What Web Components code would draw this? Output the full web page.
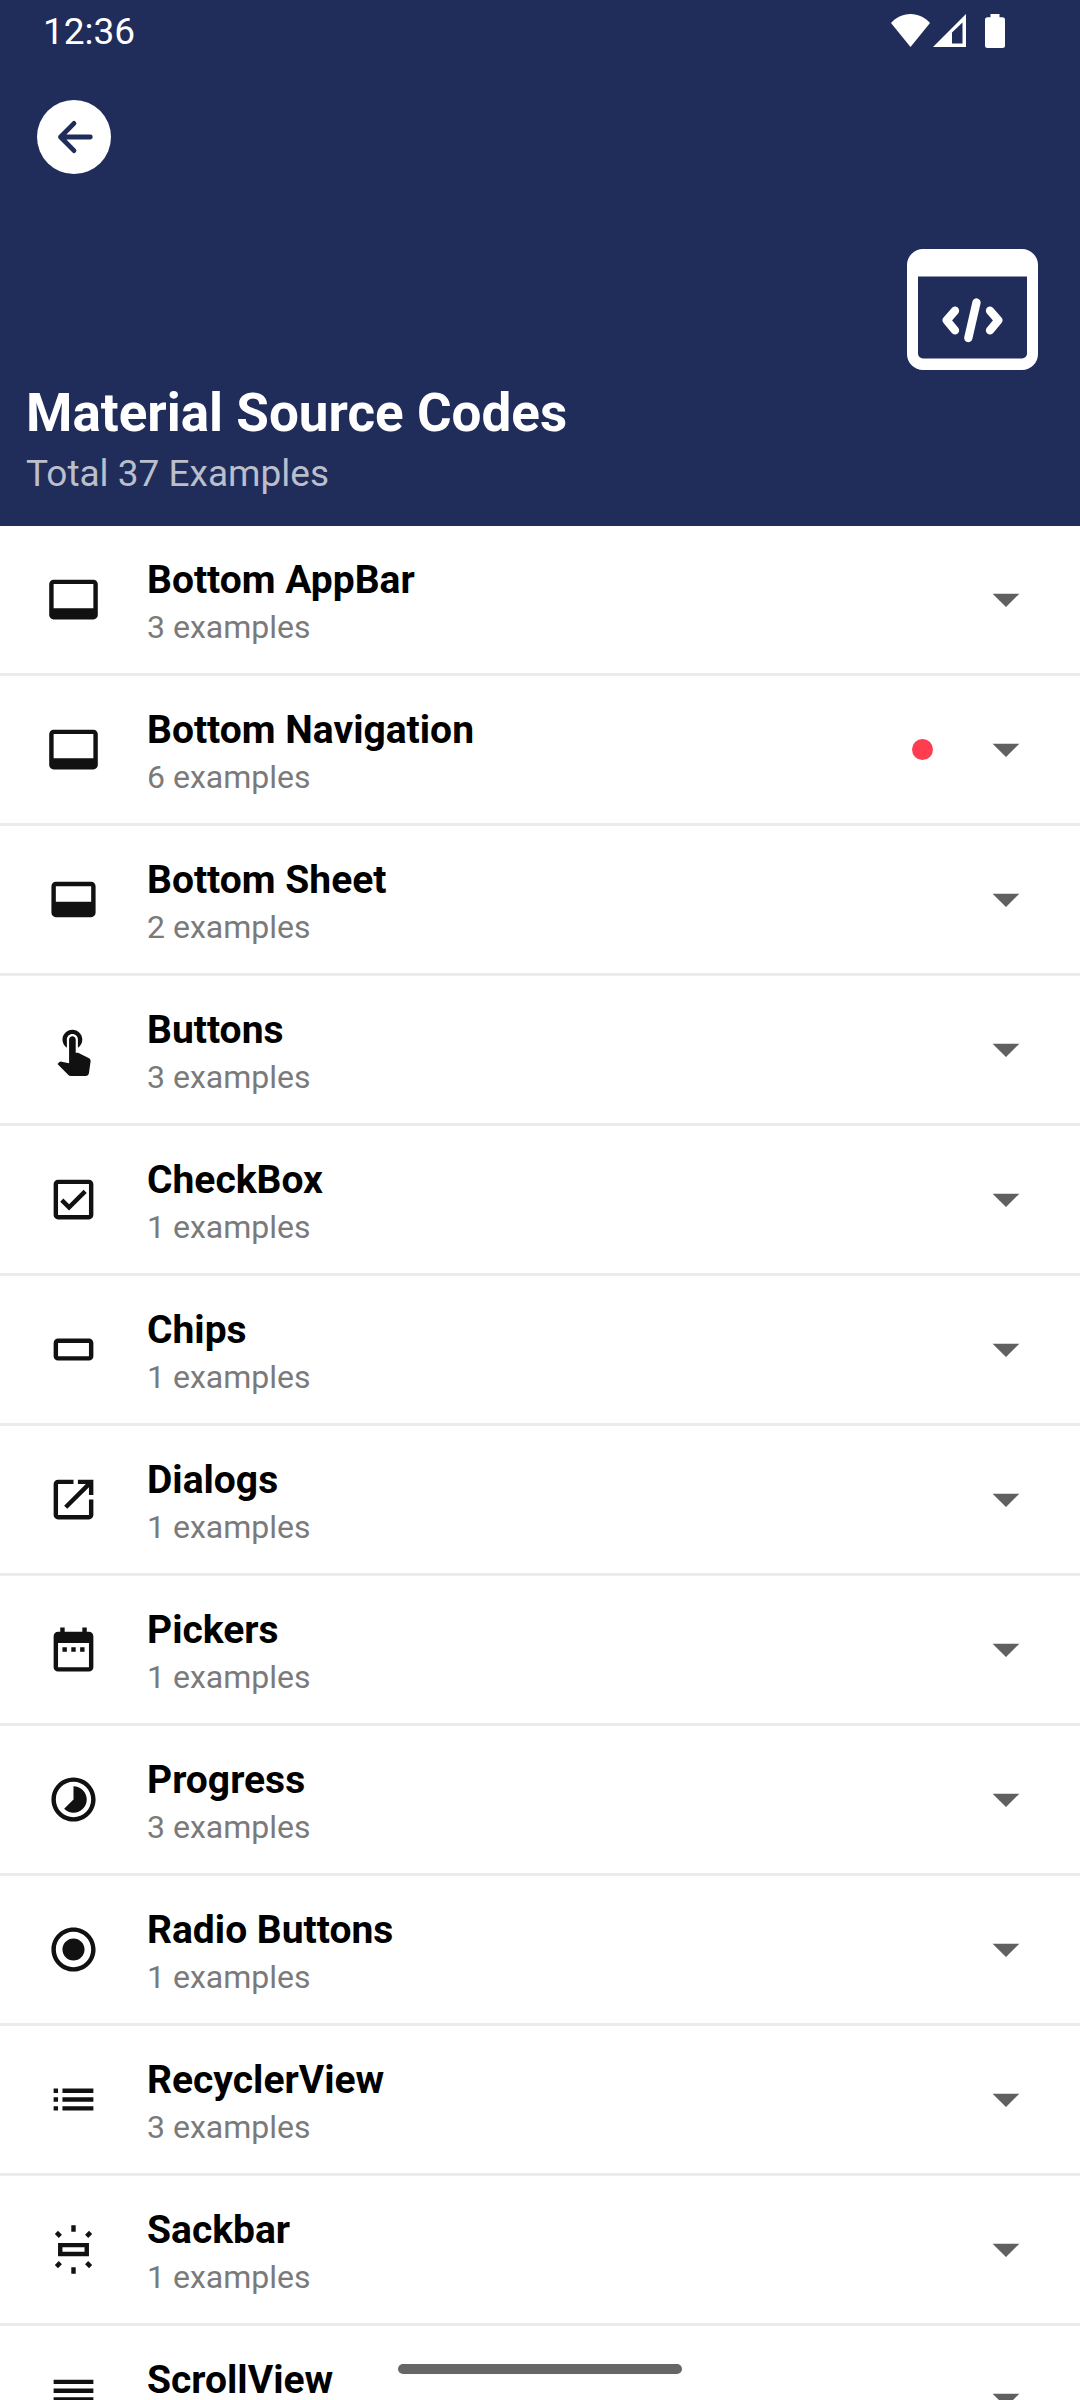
<!DOCTYPE html>
<html lang="en">
<head>
<meta charset="utf-8">
<meta name="viewport" content="width=device-width, initial-scale=1">
<title>Material Source Codes</title>
<style>
  body { margin: 0; background: #fff; font-family: Roboto, "Noto Sans", sans-serif; }
</style>
</head>
<body>
<source-app>
  <status-bar slot="top">12:36</status-bar>
  <page-header slot="top">
    <span slot="title">Material Source Codes</span>
    <span slot="subtitle">Total 37 Examples</span>
  </page-header>
  <topic-row icon="label">Bottom AppBar<span slot="count">3 examples</span></topic-row>
  <topic-row icon="label" fresh>Bottom Navigation<span slot="count">6 examples</span></topic-row>
  <topic-row icon="sheet">Bottom Sheet<span slot="count">2 examples</span></topic-row>
  <topic-row icon="touch">Buttons<span slot="count">3 examples</span></topic-row>
  <topic-row icon="check">CheckBox<span slot="count">1 examples</span></topic-row>
  <topic-row icon="chip">Chips<span slot="count">1 examples</span></topic-row>
  <topic-row icon="open">Dialogs<span slot="count">1 examples</span></topic-row>
  <topic-row icon="date">Pickers<span slot="count">1 examples</span></topic-row>
  <topic-row icon="progress">Progress<span slot="count">3 examples</span></topic-row>
  <topic-row icon="radio">Radio Buttons<span slot="count">1 examples</span></topic-row>
  <topic-row icon="list">RecyclerView<span slot="count">3 examples</span></topic-row>
  <topic-row icon="snack">Sackbar<span slot="count">1 examples</span></topic-row>
  <topic-row icon="lines">ScrollView</topic-row>
</source-app>

<script>
class SourceApp extends HTMLElement {
  constructor() {
    super();
    this.attachShadow({ mode: "open" }).innerHTML = `
      <style>
        :host { display: flex; flex-direction: column; height: 100vh; overflow: hidden; }
        header { flex: none; background: #202d5a; color: #fff; }
        main { flex: 1; min-height: 0; overflow-y: auto; scrollbar-width: none; }
        /* gesture handle floats over the list */
        .handle { position: fixed; bottom: 26px; left: 50%; width: 284px; height: 10px;
          margin-left: -142px; border-radius: 5px; background: #666; }
      </style>
      <header><slot name="top"></slot></header>
      <main><slot></slot></main>
      <div class="handle"></div>`;
  }
}

class StatusBar extends HTMLElement {
  constructor() {
    super();
    this.attachShadow({ mode: "open" }).innerHTML = `
      <style>
        :host { display: flex; justify-content: space-between; align-items: flex-start;
          box-sizing: border-box; height: 63px; padding: 10px 75px 0 43px;
          font-size: 37px; line-height: 44px; }
        .icons { display: flex; padding-top: 4px; }
        svg { display: block; fill: #fff; }
        .signal { margin-left: 3px; }
        .battery { margin-left: 19px; }
      </style>
      <span><slot></slot></span>
      <div class="icons">
        <svg width="39" height="33" viewBox="0 0 39 33"><path d="M0 9C5 3.500 11.500 0 19.500 0S34 3.500 39 9L19.500 33Z"/></svg>
        <svg class="signal" width="33" height="33" viewBox="0 0 33 33"><path fill-rule="evenodd" d="M33 0V33H0ZM29.500 8.500L19 18.500V29.500H29.500Z"/></svg>
        <svg class="battery" width="20" height="34" viewBox="0 0 20 34"><path d="M5.500 0H14.500V3.300H17.500A2.500 2.500 0 0 1 20 5.800V31.500A2.500 2.500 0 0 1 17.500 34H2.500A2.500 2.500 0 0 1 0 31.500V5.800A2.500 2.500 0 0 1 2.500 3.300H5.500Z"/></svg>
      </div>`;
  }
}

class PageHeader extends HTMLElement {
  constructor() {
    super();
    this.attachShadow({ mode: "open" }).innerHTML = `
      <style>
        :host { display: flex; flex-direction: column; padding: 37px 42px 30px 26px; }
        button { width: 74px; height: 74px; margin: 0 0 0 11px; padding: 0; border: 0;
          border-radius: 50%; background: #fff; color: #202d5a; }
        svg { display: block; }
        .logo { align-self: flex-end; margin: 75px 0 12px; }
        h1 { margin: 0; font-size: 53px; line-height: 62px; font-weight: 700; }
        p { margin: 8px 0 0; font-size: 37px; line-height: 44px; color: #bbbfcc; }
      </style>
      <button type="button" aria-label="Back">
        <svg width="74" height="74" viewBox="0 0 74 74" fill="none" stroke="currentColor" stroke-width="4.800" stroke-linecap="round" stroke-linejoin="round"><path d="M53.300 37H24M37 23.400L23.500 37L37 50.600"/></svg>
      </button>
      <svg class="logo" width="131" height="121" viewBox="0 0 131 121">
        <path fill="#fff" fill-rule="evenodd" d="M16 0H115A16 16 0 0 1 131 16V105A16 16 0 0 1 115 121H16A16 16 0 0 1 0 105V16A16 16 0 0 1 16 0ZM11 27.500V104.500A5 5 0 0 0 16 109.500H115A5 5 0 0 0 120 104.500V27.500Z"/>
        <path fill="none" stroke="#fff" stroke-width="8.300" stroke-linecap="round" stroke-linejoin="round" d="M48 61.700L39.700 71.300L48 81.300M69.500 53.500L61.300 89M83 61.700L91.300 71.300L83 81.300"/>
      </svg>
      <h1><slot name="title"></slot></h1>
      <p><slot name="subtitle"></slot></p>`;
  }
}

const ICONS = {
  label: "M21 3H3c-1.100 0-2 .9-2 2v14c0 1.100.9 2 2 2h18c1.100 0 2-.9 2-2V5c0-1.100-.9-2-2-2zm0 13H3V5h18v11z",
  sheet: "M20 4H4c-1.100 0-2 .9-2 2v12c0 1.100.9 2 2 2h16c1.100 0 2-.9 2-2V6c0-1.100-.9-2-2-2zm0 9H4V6h16v7z",
  touch: "M9 11.240V7.500C9 6.120 10.120 5 11.500 5S14 6.120 14 7.500v3.740c1.210-.81 2-2.180 2-3.740C16 5.010 13.990 3 11.500 3S7 5.010 7 7.500c0 1.560.79 2.930 2 3.740zm9.840 4.630l-4.540-2.260c-.17-.07-.35-.11-.54-.11H13v-6c0-.83-.67-1.500-1.500-1.500S10 6.670 10 7.500v10.740l-3.430-.72c-.08-.01-.15-.03-.24-.03-.31 0-.59.13-.79.33l-.79.8 4.940 4.940c.27.27.65.44 1.060.44h6.790c.75 0 1.330-.55 1.440-1.280l.75-5.270c.01-.07.02-.14.02-.2 0-.62-.38-1.160-.91-1.380z",
  check: "M19 3H5c-1.110 0-2 .9-2 2v14c0 1.100.89 2 2 2h14c1.110 0 2-.9 2-2V5c0-1.100-.89-2-2-2zm0 16H5V5h14v14zM17.990 9l-1.410-1.420-6.590 6.590-2.580-2.570-1.420 1.410 4 3.990z",
  chip: "M19 7H5c-1.100 0-2 .9-2 2v6c0 1.100.9 2 2 2h14c1.100 0 2-.9 2-2V9c0-1.100-.9-2-2-2zm0 8H5V9h14v6z",
  open: "M19 19H5V5h7V3H5c-1.110 0-2 .9-2 2v14c0 1.100.89 2 2 2h14c1.100 0 2-.9 2-2v-7h-2v7zM14 3v2h3.590l-9.830 9.830 1.410 1.410L19 6.410V10h2V3h-7z",
  date: "M9 11H7v2h2v-2zm4 0h-2v2h2v-2zm4 0h-2v2h2v-2zm2-7h-1V2h-2v2H8V2H6v2H5c-1.110 0-2 .9-2 2v14c0 1.100.89 2 2 2h14c1.100 0 2-.9 2-2V6c0-1.100-.9-2-2-2zm0 16H5V9h14v11z",
  progress: "M16.240 7.760C15.070 6.590 13.540 6 12 6v6l-4.240 4.240c2.340 2.340 6.140 2.340 8.490 0 2.340-2.340 2.340-6.140-.01-8.480zM12 2C6.480 2 2 6.480 2 12s4.480 10 10 10 10-4.480 10-10S17.520 2 12 2zm0 18c-4.420 0-8-3.580-8-8s3.580-8 8-8 8 3.580 8 8-3.580 8-8 8z",
  radio: "M12 7c-2.760 0-5 2.240-5 5s2.240 5 5 5 5-2.240 5-5-2.240-5-5-5zm0-5C6.480 2 2 6.480 2 12s4.480 10 10 10 10-4.480 10-10S17.520 2 12 2zm0 18c-4.420 0-8-3.580-8-8s3.580-8 8-8 8 3.580 8 8-3.580 8-8 8z",
  list: "M3 13h2v-2H3v2zm0 4h2v-2H3v2zm0-8h2V7H3v2zm4 4h14v-2H7v2zm0 4h14v-2H7v2zM7 7v2h14V7H7z",
  snack: "M5 15h14V9H5v6zM7 11h10v2H7v-2zM11 1.050V4h2V1.050h-2zm8.040 2.500l-1.790 1.790 1.410 1.410 1.800-1.790-1.420-1.410zM13 22.950V20h-2v2.950h2zm7.450-3.910l-1.800-1.790-1.410 1.410 1.790 1.800 1.420-1.420zM3.550 4.960l1.790 1.790 1.410-1.410-1.790-1.790-1.410 1.410zm1.410 15.500l1.790-1.800-1.410-1.410-1.790 1.790 1.410 1.420z",
  lines: "M3 21h18v-2H3v2zm0-4h18v-2H3v2zm0-4h18v-2H3v2zm0-4h18V7H3v2zm0-6v2h18V3H3z"
};

class TopicRow extends HTMLElement {
  constructor() {
    super();
    this.attachShadow({ mode: "open" }).innerHTML = `
      <style>
        :host { display: block; border-bottom: 3px solid #ebebeb; }
        button { display: flex; align-items: center; box-sizing: border-box; width: 100%;
          min-height: 147px; margin: 0; padding: 0 42px 0 47px; border: 0; background: none;
          font: inherit; color: #000; text-align: left; }
        svg { display: block; flex: none; }
        .icon { fill: #111; }
        .text { display: flex; flex-direction: column; gap: 5px; flex: 1; align-self: flex-start;
          padding: 31px 0 27px 47px; }
        .name { font-size: 39px; line-height: 46px; font-weight: 700; }
        .count { font-size: 32px; line-height: 38px; color: #7a7a7a; }
        .dot { display: none; flex: none; width: 21px; height: 21px; margin-right: 42px;
          border-radius: 50%; background: #ff3d51; }
        :host([fresh]) .dot { display: block; }
        .arrow { fill: #606060; }
      </style>
      <button type="button" aria-expanded="false">
        <svg class="icon" width="53" height="53" viewBox="0 0 24 24"><path fill-rule="evenodd" d="${ICONS[this.getAttribute("icon")]}"/></svg>
        <span class="text"><span class="name"><slot></slot></span><span class="count"><slot name="count"></slot></span></span>
        <span class="dot"></span>
        <svg class="arrow" width="63" height="63" viewBox="0 0 24 24"><path d="M6.700 9.800h10.200l-5.100 5.100z"/></svg>
      </button>`;
  }
}

customElements.define("source-app", SourceApp);
customElements.define("status-bar", StatusBar);
customElements.define("page-header", PageHeader);
customElements.define("topic-row", TopicRow);
</script>
</body>
</html>
